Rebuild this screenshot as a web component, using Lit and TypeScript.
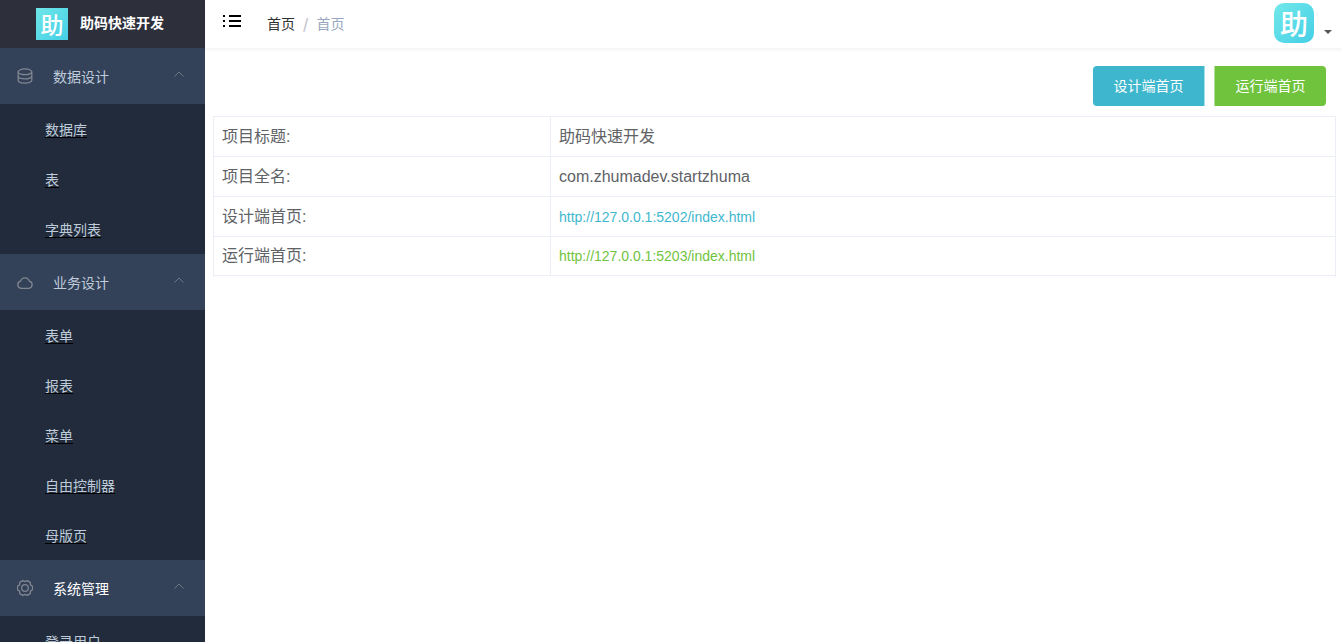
import { LitElement, html, css, svg } from "lit";
import { customElement } from "lit/decorators.js";

const gearPoints = [0, 60, 120, 180, 240, 300]
  .flatMap((deg) =>
    [
      [7.7, deg - 13],
      [7.7, deg + 13],
      [6.3, deg + 30],
    ].map(([r, a]) => {
      const rad = (a * Math.PI) / 180;
      return `${(8 + r * Math.cos(rad)).toFixed(2)},${(8 + r * Math.sin(rad)).toFixed(2)}`;
    })
  )
  .join(" ");

const icons = {
  db: svg`<ellipse cx="8" cy="3.8" rx="6.8" ry="2.9"/><path d="M1.200 3.800v8.400c0 1.600 3 2.900 6.800 2.900s6.800-1.300 6.800-2.900V3.800"/><path d="M1.200 8c0 1.600 3 2.900 6.800 2.900s6.800-1.300 6.800-2.900"/>`,
  cloud: svg`<path d="M4.400 14.300h7.300a3.600 3.600 0 0 0 .6-7.100a4.500 4.500 0 0 0-8.700 0a3.600 3.600 0 0 0 .8 7.100z"/>`,
  gear: svg`<polygon points=${gearPoints} stroke-linejoin="round"/><circle cx="8" cy="8" r="3.300"/>`,
};

const menu = [
  { title: "数据设计", icon: icons.db, bright: false, items: ["数据库", "表", "字典列表"] },
  { title: "业务设计", icon: icons.cloud, bright: false, items: ["表单", "报表", "菜单", "自由控制器", "母版页"] },
  { title: "系统管理", icon: icons.gear, bright: true, items: ["登录用户"] },
];

@customElement("app-root")
export class AppRoot extends LitElement {
  static styles = css`
    :host {
      display: flex;
      height: 100vh;
      overflow: hidden;
      font-family: "Liberation Sans", "Noto Sans CJK SC", sans-serif;
      background: #fff;
    }
    .side {
      width: 205px;
      flex: none;
      background: #212b3b;
      overflow: hidden;
    }
    .brand {
      height: 48px;
      background: #2d2f3b;
      display: flex;
      align-items: center;
      gap: 12px;
      padding: 0 0 1px 36px;
      box-sizing: border-box;
    }
    .brand-logo {
      width: 32px;
      height: 32px;
      background: linear-gradient(135deg, #6fe6e8, #45cfe6);
      color: #fff;
      display: flex;
      align-items: center;
      justify-content: center;
      font: 500 23px/32px "Noto Sans CJK SC", sans-serif;
    }
    .brand-name {
      color: #fff;
      font: 700 14px/20px "Noto Sans CJK SC", sans-serif;
      margin-top: -3px;
    }
    .group-title {
      height: 56px;
      background: #334159;
      display: flex;
      align-items: center;
      padding-left: 17px;
      color: #bfcbd9;
      font: 400 14px/20px "Noto Sans CJK SC", sans-serif;
    }
    .group-title.bright {
      color: #fff;
    }
    .group-icon {
      width: 16px;
      height: 16px;
      fill: none;
      stroke: #808690;
      stroke-width: 1.3;
      margin-right: 20px;
    }
    .chev {
      width: 10px;
      height: 6px;
      fill: none;
      stroke: #6f7786;
      stroke-width: 1;
      margin-left: auto;
      margin-right: 21px;
      margin-top: -4px;
    }
    .item {
      height: 50px;
      display: flex;
      align-items: center;
      padding-left: 45px;
      color: #bfcbd9;
      font: 400 14px/20px "Noto Sans CJK SC", sans-serif;
    }
    .item span {
      text-decoration: underline;
      text-decoration-color: #000;
      text-decoration-thickness: 1px;
      text-underline-offset: 2px;
    }
    .main {
      flex: 1;
      min-width: 0;
      display: flex;
      flex-direction: column;
    }
    .top {
      height: 48px;
      flex: none;
      box-sizing: border-box;
      box-shadow: 0 1px 4px rgba(0, 21, 41, 0.08);
      display: flex;
      align-items: center;
      padding-left: 18px;
    }
    .burger {
      width: 18px;
      height: 14px;
      margin-top: -7px;
      fill: #000;
    }
    .crumbs {
      margin-left: 26px;
      margin-top: -3px;
      font: 400 14px/20px "Noto Sans CJK SC", sans-serif;
      color: #303133;
      display: flex;
    }
    .crumbs i {
      font-style: normal;
      font-weight: 700;
      color: #c0c4cc;
      margin: 0 8px;
    }
    .crumbs b {
      font-weight: 400;
      color: #97a8be;
    }
    .avatar {
      margin-left: auto;
      margin-bottom: 2px;
      width: 40px;
      height: 40px;
      border-radius: 10px;
      background: linear-gradient(135deg, #72e8ea, #45cfe6);
      color: #fff;
      display: flex;
      align-items: center;
      justify-content: center;
      font: 500 28px/40px "Noto Sans CJK SC", sans-serif;
    }
    .caret {
      width: 0;
      height: 0;
      border: 4px solid transparent;
      border-top: 4px solid #555;
      border-bottom: 0;
      margin: 16px 10px 0 10px;
    }
    .content {
      padding: 18px 6px 0 8px;
    }
    .actions {
      display: flex;
      justify-content: flex-end;
      gap: 9px;
      padding-right: 10px;
      margin-bottom: 10px;
    }
    .btn {
      width: 112px;
      height: 40px;
      box-sizing: border-box;
      display: flex;
      align-items: center;
      justify-content: center;
      color: #fff;
      padding-bottom: 3px;
      font: 400 14px/20px "Noto Sans CJK SC", sans-serif;
    }
    .btn.blue {
      background: #3eb7ce;
      border-right: 1px solid #a5dde8;
      border-radius: 4px 0 0 4px;
    }
    .btn.green {
      background: #70c33d;
      border-left: 1px solid #b5e09a;
      border-radius: 0 4px 4px 0;
    }
    .grid {
      display: grid;
      grid-template-columns: 337px 1fr;
      grid-auto-rows: 40px;
      border: 1px solid #ebeef5;
      border-bottom: 0;
    }
    .cell {
      box-sizing: border-box;
      display: flex;
      align-items: center;
      padding: 0 8px;
      font: 400 16px/20px "Liberation Sans", "Noto Sans CJK SC", sans-serif;
      color: #606266;
      border-bottom: 1px solid #ebeef5;
    }
    .cell.label {
      border-right: 1px solid #ebeef5;
    }
    .cell.small {
      font-size: 14px;
    }
    .cell.last {
      height: 39px;
    }
    .blue-t {
      color: #3eb7ce;
    }
    .green-t {
      color: #70c33d;
    }
  `;

  render() {
    return html`
      <aside class="side">
        <div class="brand">
          <div class="brand-logo">助</div>
          <div class="brand-name">助码快速开发</div>
        </div>
        ${menu.map(
          (g) => html`
            <div class="group-title ${g.bright ? "bright" : ""}">
              <svg class="group-icon" viewBox="0 0 16 16">${g.icon}</svg>
              ${g.title}
              <svg class="chev" viewBox="0 0 10 6"><path d="M.5 5.500L5 1l4.500 4.500" /></svg>
            </div>
            ${g.items.map((t) => html`<div class="item"><span>${t}</span></div>`)}
          `
        )}
      </aside>
      <div class="main">
        <header class="top">
          <svg class="burger" viewBox="0 0 18 14">
            <rect x="0" y="1" width="2" height="2" /><rect x="6" y="1" width="12" height="2" />
            <rect x="0" y="6" width="2" height="2" /><rect x="6" y="6" width="12" height="2" />
            <rect x="0" y="11" width="2" height="2" /><rect x="6" y="11" width="12" height="2" />
          </svg>
          <div class="crumbs">首页<i>/</i><b>首页</b></div>
          <div class="avatar">助</div>
          <div class="caret"></div>
        </header>
        <section class="content">
          <div class="actions">
            <div class="btn blue">设计端首页</div>
            <div class="btn green">运行端首页</div>
          </div>
          <div class="grid">
            <div class="cell label">项目标题:</div>
            <div class="cell">助码快速开发</div>
            <div class="cell label">项目全名:</div>
            <div class="cell">com.zhumadev.startzhuma</div>
            <div class="cell label">设计端首页:</div>
            <div class="cell small blue-t">http://127.0.0.1:5202/index.html</div>
            <div class="cell label last">运行端首页:</div>
            <div class="cell small green-t last">http://127.0.0.1:5203/index.html</div>
          </div>
        </section>
      </div>
    `;
  }
}
